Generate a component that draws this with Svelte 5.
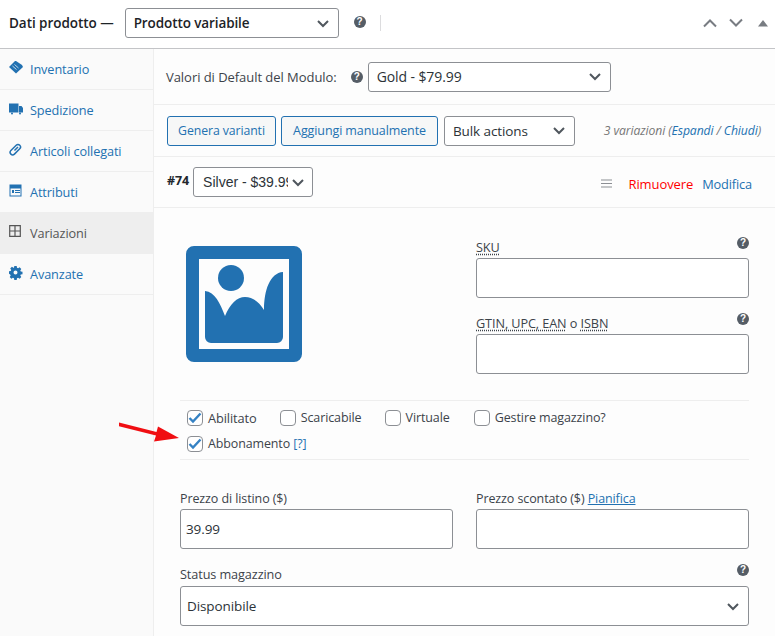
<script>
  const tabs = [
    { label: 'Inventario', icon: 'tag' },
    { label: 'Spedizione', icon: 'truck' },
    { label: 'Articoli collegati', icon: 'link' },
    { label: 'Attributi', icon: 'attr' },
    { label: 'Variazioni', icon: 'grid', active: true },
    { label: 'Avanzate', icon: 'gear' }
  ];
</script>

{#snippet chevron(cls = '')}
  <svg class="chev {cls}" width="14" height="9" viewBox="0 0 14 9"><path d="M2 2l5 5 5-5" fill="none" stroke="currentColor" stroke-width="2"/></svg>
{/snippet}
{#snippet help(cls = '')}
  <span class="help {cls}">?</span>
{/snippet}

<div class="page">
  <header class="head">
    <span class="title">Dati prodotto —</span>
    <div class="select type"><span>Prodotto variabile</span>{@render chevron()}</div>
    {@render help('help-top')}
    <span class="vsep"></span>
    <div class="handles">
      <svg width="16" height="10" viewBox="0 0 16 10"><path d="M2 8.500l6-6 6 6" fill="none" stroke="#787c82" stroke-width="2"/></svg>
      <svg width="16" height="10" viewBox="0 0 16 10"><path d="M2 1.500l6 6 6-6" fill="none" stroke="#787c82" stroke-width="2"/></svg>
      <svg width="10" height="7" viewBox="0 0 10 7"><path d="M5 0l5 6.500H0z" fill="#787c82"/></svg>
    </div>
  </header>
  <div class="body">
    <nav class="side">
      {#each tabs as t}
        <div class="tab" class:active={t.active}>
          <svg class="ico" width="14" height="14" viewBox="0 0 14 14">
            {#if t.icon === 'tag'}
              <path d="M0 6l6-6h1l6 4 1 2-7 6.500z" fill="currentColor"/><path d="M3.500 5l4 3.500M5.500 3.500l4 3.500" stroke="#fff" stroke-width=".7"/>
            {:else if t.icon === 'truck'}
              <path d="M0 1.500h9.500v9H0zM10 4h2.500l1.500 2v4.500h-4z" fill="currentColor"/><circle cx="3" cy="11.500" r="1" fill="currentColor"/><circle cx="11" cy="11.500" r="1" fill="currentColor"/>
            {:else if t.icon === 'link'}
              <g transform="rotate(45 6.500 6.500)" fill="none" stroke="currentColor" stroke-width="1.500"><rect x="4" y=".5" width="5" height="12.500" rx="2.500"/><path d="M6.500 3v5"/></g>
            {:else if t.icon === 'attr'}
              <path fill-rule="evenodd" d="M0 0h12v12H0zM1 4v7h10V4z" fill="currentColor" transform="translate(.5 .5)"/><path d="M3 6h2v3H3zM6 6h5v1H6zM6 8h5v1H6z" fill="currentColor"/>
            {:else if t.icon === 'grid'}
              <path d="M.7.700h10.600v10.600H.7zM6 .7v10.600M.7 6h10.600" fill="none" stroke="currentColor" stroke-width="1.200"/>
            {:else}
              <path fill-rule="evenodd" d="M5.300 0h2.400l.3 1.700 1.100.5 1.500-1 1.700 1.700-1 1.500.5 1.100 1.700.3v2.400l-1.700.3-.5 1.100 1 1.500-1.700 1.700-1.500-1-1.100.5-.3 1.700H5.300l-.3-1.700-1.100-.5-1.500 1-1.700-1.700 1-1.500-.5-1.100L0 7.700V5.300l1.700-.3.500-1.100-1-1.500 1.700-1.700 1.500 1L5 1.700zM6.500 4.500a2 2 0 1 0 0 4 2 2 0 0 0 0-4z" fill="currentColor"/>
            {/if}
          </svg>
          <span>{t.label}</span>
        </div>
      {/each}
    </nav>
    <main class="main">
      <div class="bar defaults">
        <span class="lbl">Valori di Default del Modulo:</span>
        {@render help()}
        <div class="select gold"><span>Gold - $79.99</span>{@render chevron()}</div>
      </div>
      <div class="bar actions">
        <span class="btn gen">Genera varianti</span>
        <span class="btn manual">Aggiungi manualmente</span>
        <div class="select bulk"><span>Bulk actions</span>{@render chevron()}</div>
        <span class="count">3 variazioni (<a href="#e">Espandi</a> / <a href="#c">Chiudi</a>)</span>
      </div>
      <div class="bar variation">
        <strong class="num">#74</strong>
        <div class="select silver"><span class="clip">Silver - $39.99</span>{@render chevron()}</div>
        <svg class="menu" width="12" height="10" viewBox="0 0 12 10"><path d="M0 1h11M0 4.500h11M0 8h11" stroke="#8c8f94" stroke-width="1.200"/></svg>
        <a class="remove" href="#r">Rimuovere</a>
        <a class="edit" href="#m">Modifica</a>
      </div>
      <section class="form">
        <div class="top">
          <svg class="thumb" width="116" height="116" viewBox="0 0 116 116">
            <path fill-rule="evenodd" d="M8 0h100a8 8 0 0 1 8 8v100a8 8 0 0 1-8 8H8a8 8 0 0 1-8-8V8a8 8 0 0 1 8-8zM13 13v90h90V13z" fill="#2271b1"/>
            <circle cx="45" cy="32" r="13" fill="#2271b1"/>
            <path d="M19 45c10 1 15 12 20 25 5-12 12-19 20-19 8 0 14 5 19 13 0-20 6-37 19-38v65a6 6 0 0 1-6 6H25a6 6 0 0 1-6-6z" fill="#2271b1"/>
          </svg>
          <div class="fields">
            <div class="field">
              <div class="flabel"><abbr>SKU</abbr>{@render help('up')}</div>
              <div class="input"></div>
            </div>
            <div class="field">
              <div class="flabel"><span><abbr>GTIN, UPC, EAN</abbr> o <abbr>ISBN</abbr></span>{@render help('up')}</div>
              <div class="input"></div>
            </div>
          </div>
        </div>
        <div class="opts">
          <div class="opt-row">
            <label class="opt first"><span class="cb on"><svg width="14" height="12" viewBox="0 0 14 12"><path d="M1.500 6l3.500 3.500L12.500 1.500" fill="none" stroke="#3582c4" stroke-width="2.400"/></svg></span>Abilitato</label>
            <label class="opt second"><span class="cb"></span>Scaricabile</label>
            <label class="opt"><span class="cb"></span>Virtuale</label>
            <label class="opt"><span class="cb"></span>Gestire magazzino?</label>
          </div>
          <div class="opt-row">
            <label class="opt sub"><span class="cb on"><svg width="14" height="12" viewBox="0 0 14 12"><path d="M1.500 6l3.500 3.500L12.500 1.500" fill="none" stroke="#3582c4" stroke-width="2.400"/></svg></span>Abbonamento&nbsp;<a href="#q">[?]</a></label>
          </div>
        </div>
        <div class="prices">
          <div class="pf">
            <div class="plabel">Prezzo di listino ($)</div>
            <div class="input price">39.99</div>
          </div>
          <div class="pf">
            <div class="plabel">Prezzo scontato ($) <a class="u" href="#p">Pianifica</a></div>
            <div class="input price"></div>
          </div>
        </div>
        <div class="stock">
          <div class="flabel stocklbl"><span>Status magazzino</span>{@render help('up')}</div>
          <div class="select dispo"><span>Disponibile</span>{@render chevron()}</div>
        </div>
      </section>
    </main>
  </div>
  <svg class="arrow" width="64" height="26" viewBox="0 0 64 26"><path d="M0 2.500L37.500 12 39 6.500 60 18 35 21.500 37 15.500-1 6z" fill="#f00e12"/></svg>
</div>

<style>
  :global(body) { margin: 0; background: #fff; }
  .page { position: relative; width: 775px; height: 636px; overflow: hidden; font: 13px/20px "Open Sans", "Noto Sans", sans-serif; color: #3c434a; letter-spacing: -0.1px; }
  a { color: #2271b1; text-decoration: none; }
  .head { height: 46px; display: flex; align-items: center; border-bottom: 1px solid #c3c4c7; padding: 0 0 2px 9px; box-sizing: content-box; }
  .title { font-weight: 600; font-size: 13.500px; color: #1d2327; margin-right: 11px; letter-spacing: -0.05px; margin-top: -1px; }
  .select { display: flex; align-items: center; justify-content: space-between; box-sizing: border-box; border: 1px solid #8c8f94; border-radius: 3px; background: #fff; color: #2c3338; padding: 0 8px; font-size: 14px; }
  .chev { color: #50575e; flex: none; }
  .type { width: 214px; height: 30px; font-weight: 600; color: #1d2327; font-size: 13.500px; }
  .help { flex: none; display: inline-flex; align-items: center; justify-content: center; width: 12px; height: 12px; border-radius: 50%; background: #555d66; color: #fff; font: bold 10px/12px "Liberation Sans", sans-serif; letter-spacing: 0; }
  .help-top { margin: -2px 0 0 15px; }
  .up { position: relative; top: -4px; }
  .vsep { width: 1px; height: 16px; background: #dcdcde; margin-left: 14px; }
  .handles { margin-left: auto; display: flex; align-items: center; gap: 10px; margin-right: 7px; }
  .handles svg:last-child { margin-left: 4px; }
  .body { display: flex; height: 587px; }
  .side { width: 153px; flex: none; background: #fafafa; border-right: 1px solid #eee; }
  .tab { height: 40px; border-bottom: 1px solid #eee; display: flex; align-items: center; gap: 7px; padding-left: 9px; color: #2271b1; font-size: 12.700px; }
  .tab.active { background: #eee; color: #555; }
  .ico { flex: none; margin-top: -3px; }
  .main { flex: 1; background: #fdfdfd; min-width: 0; }
  .bar { display: flex; align-items: center; border-bottom: 1px solid #eee; padding: 0 13px 0 12px; box-sizing: border-box; background: #fdfdfd; }
  .defaults { height: 56px; }
  .lbl { letter-spacing: -0.05px; }
  .defaults .help { margin: 0 5px 0 14px; }
  .gold { width: 243px; height: 30px; }
  .actions { height: 52px; padding-left: 13px; }
  .btn { display: block; box-sizing: border-box; height: 30px; line-height: 27px; border: 1px solid #2271b1; border-radius: 3px; background: #f6f7f7; color: #2271b1; font-size: 12.500px; text-align: center; white-space: nowrap; }
  .gen { width: 109px; margin-right: 5px; font-size: 12.300px; }
  .manual { width: 157px; margin-right: 6px; }
  .bulk { width: 131px; height: 30px; color: #2c3338; font-size: 13.500px; }
  .count { margin-left: auto; margin-right: 1px; font-style: italic; color: #777; font-size: 12.200px; }
  .variation { height: 51px; padding-left: 13px; }
  .num { font-weight: 700; color: #23282d; font-size: 12.500px; margin: -2px 4px 0 0; }
  .silver { width: 120px; height: 30px; padding: 0 7px 0 9px; font: 14px "Liberation Sans", sans-serif; letter-spacing: 0; }
  .clip { width: 85px; overflow: hidden; white-space: nowrap; }
  .menu { margin: 4px 16px 0 auto; }
  .remove { color: #f00; margin: 4px 9px 0 0; font-size: 13px; }
  .edit { margin: 4px 10px 0 0; font-size: 12.800px; letter-spacing: -0.15px; }
  .form { padding: 0 26px; }
  .top { display: flex; height: 192px; }
  .thumb { margin: 38px 0 0 6px; flex: none; }
  .fields { margin-left: 174px; width: 273px; flex: none; padding-top: 29px; }
  .field { margin-bottom: 15px; }
  .flabel { display: flex; justify-content: space-between; align-items: center; height: 20px; font-size: 12.700px; }
  abbr { text-decoration: underline dotted; text-underline-offset: 2px; }
  .input { box-sizing: border-box; height: 40px; border: 1px solid #8c8f94; border-radius: 3px; background: #fff; margin-top: 1px; }
  .opts { border-top: 1px solid #eee; border-bottom: 1px solid #eee; padding: 4px 0 0 7px; height: 60px; box-sizing: border-box; }
  .opt-row { display: flex; gap: 24px; height: 26px; align-items: center; }
  .opt { display: inline-flex; align-items: center; font-size: 12.500px; }
  .first { font-size: 12.800px; margin-right: -1px; }
  .second { margin-right: -1px; }
  .sub { font-size: 12.450px; }
  .cb { box-sizing: border-box; width: 16px; height: 16px; border: 1px solid #8c8f94; border-radius: 4px; background: #fff; margin-right: 5px; display: flex; align-items: center; justify-content: center; }
  .prices { display: flex; justify-content: space-between; margin-top: 29px; }
  .pf { width: 273px; }
  .plabel { height: 20px; font-size: 12.500px; }
  .price { margin-top: 0; padding: 0 5px; line-height: 38px; font-size: 13.500px; color: #2c3338; }
  .u { text-decoration: underline; }
  .stock { margin-top: 15px; }
  .dispo { height: 40px; margin-top: 2px; padding: 0 8px 0 6px; font-size: 13.500px; }
  .arrow { position: absolute; left: 119px; top: 420px; }
</style>
